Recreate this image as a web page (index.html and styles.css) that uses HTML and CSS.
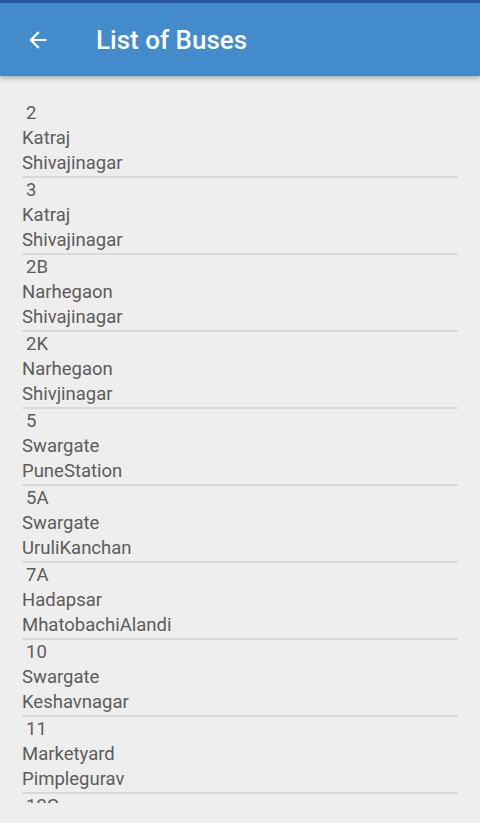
FILE: index.html
```html
<!DOCTYPE html>
<html>
<head>
<meta charset="utf-8">
<link rel="stylesheet" href="styles.css">
</head>
<body>
<div class="status"></div>
<header class="appbar">
  <svg class="back" width="24" height="24" viewBox="0 0 24 24"><path d="M20 11H7.83l5.59-5.59L12 4l-8 8 8 8 1.41-1.41L7.83 13H20v-2z" fill="#fff"/></svg>
  <h1 class="title">List of Buses</h1>
</header>
<main class="list">
  <div class="item"><div class="num">2</div><div class="line">Katraj</div><div class="line">Shivajinagar</div></div>
  <div class="item"><div class="num">3</div><div class="line">Katraj</div><div class="line">Shivajinagar</div></div>
  <div class="item"><div class="num">2B</div><div class="line">Narhegaon</div><div class="line">Shivajinagar</div></div>
  <div class="item"><div class="num">2K</div><div class="line">Narhegaon</div><div class="line">Shivjinagar</div></div>
  <div class="item"><div class="num">5</div><div class="line">Swargate</div><div class="line">PuneStation</div></div>
  <div class="item"><div class="num">5A</div><div class="line">Swargate</div><div class="line">UruliKanchan</div></div>
  <div class="item"><div class="num">7A</div><div class="line">Hadapsar</div><div class="line">MhatobachiAlandi</div></div>
  <div class="item"><div class="num">10</div><div class="line">Swargate</div><div class="line">Keshavnagar</div></div>
  <div class="item"><div class="num">11</div><div class="line">Marketyard</div><div class="line">Pimplegurav</div></div>
  <div class="item"><div class="num">12C</div></div>
</main>
</body>
</html>
```
FILE: styles.css
```css
html, body {
  margin: 0;
  padding: 0;
  background: #eeeeee;
  font-family: Roboto, "Noto Sans", sans-serif;
  height: 823px;
  overflow: hidden;
}
.status {
  height: 3px;
  background: #2b5aa6;
}
.appbar {
  height: 73px;
  background: #448bcb;
  display: flex;
  align-items: center;
  box-shadow: 0 2px 5px rgba(0,0,0,0.3);
  position: relative;
  z-index: 1;
}
.back {
  margin-left: 25px;
  width: 26px;
  height: 26px;
  flex: none;
}
.title {
  margin: 0 0 0 45px;
  color: #fff;
  font-size: 26px;
  font-weight: 500;
}
.list {
  margin: 25px 22px 0 22px;
  height: 702px;
  overflow: hidden;
}
.item {
  border-bottom: 2px solid #d9d9d9;
  font-size: 18.5px;
  color: #5c5c5c;
}
.num, .line {
  height: 25px;
  line-height: 25px;
}
.num {
  padding-left: 4px;
}
```
